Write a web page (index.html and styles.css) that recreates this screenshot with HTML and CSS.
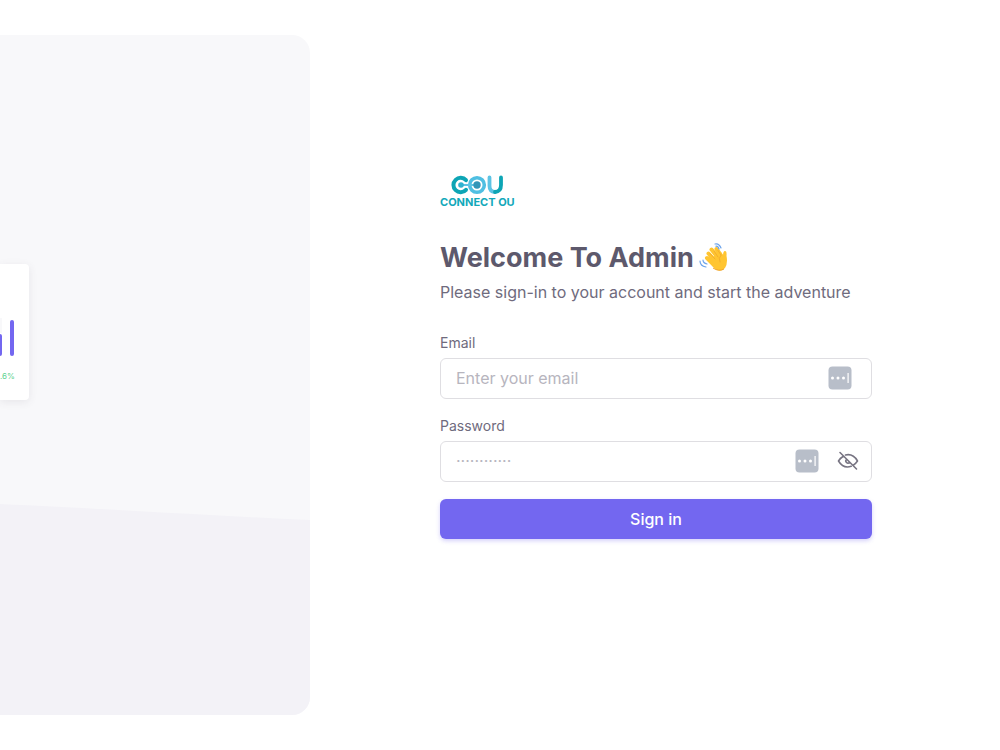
FILE: index.html
```html
<!DOCTYPE html>
<html lang="en">
<head>
<meta charset="utf-8">
<title>Admin sign in</title>
<link rel="stylesheet" href="styles.css">
</head>
<body>
<div class="page">
  <aside class="cover">
    <svg class="cover-wave" viewBox="0 0 310 680" preserveAspectRatio="none" aria-hidden="true"><path d="M0 469 C90 473 200 480 310 485 V680 H0Z" fill="#f3f2f7"/></svg>
    <div class="stat-card">
      <svg class="bars" width="15" height="40" viewBox="0 0 15 40" aria-hidden="true">
        <path d="M0 0h2v15H0z" fill="#f8f8fa"/>
        <path d="M0 16q2 0 2 2v18q0 2-2 2z" fill="#7367f0"/>
        <rect x="10" y="2" width="4" height="36" rx="2" fill="#7367f0"/>
      </svg>
      <span class="stat-change">.6%</span>
    </div>
  </aside>
  <main class="login">
    <div class="panel">
      <div class="logo">
        <svg width="54" height="20" viewBox="0 0 54 20" fill="none" aria-hidden="true">
          <path d="M16 5.200A7.200 7.200 0 1 0 16 14.800" stroke="#0da5b5" stroke-width="4" stroke-linecap="round"/>
          <circle cx="27" cy="10" r="7.300" stroke="#4fbfe2" stroke-width="3.600"/>
          <path d="M11 10H27" stroke="#5cc3e4" stroke-width="2"/>
          <circle cx="11" cy="10" r="2.800" fill="#2fb3cf"/>
          <circle cx="27" cy="10" r="3.700" fill="#3295b8"/>
          <path d="M39.500 2.500V11Q39.500 16.500 45 17" stroke="#5cc3e4" stroke-width="3.800" stroke-linecap="round"/>
          <path d="M51 2.500V10Q51 16.500 45 17" stroke="#0da5b5" stroke-width="3.800" stroke-linecap="round"/>
        </svg>
        <span class="logo-name">CONNECT OU</span>
      </div>
      <h1 class="title">Welcome To Admin
        <svg class="wave" width="30" height="30" viewBox="0 0 30 30" fill="none" aria-hidden="true">
          <g stroke="#ffc531" stroke-linecap="round">
            <path d="M9.500 10.500L17 19M12.500 6.500L20 16M17.500 6L23 14M8 15L15 22" stroke-width="4"/>
          </g>
          <path d="M9 17L22 9L24 13Q24 8 26 8Q28 8 27.500 13Q29 20 26 25Q21 30 15 25Z" fill="#ffc531"/>
          <path d="M11 10.500L16 16M15 8L19 14M19 7.500L22 12M22 12Q19 15 21 19" stroke="#f2ab2b" stroke-width="0.900" stroke-linecap="round"/>
          <path d="M14 25Q20 29 25 26" stroke="#f0a32a" stroke-width="1"/>
          <path d="M16 1Q20 0 22 5M17 3.200Q19 3 20 6M1 18Q1 23 7 24M4 17Q4 20 8 21" stroke="#6ca3ea" stroke-width="1.200" stroke-linecap="round"/>
        </svg>
      </h1>
      <p class="subtitle">Please sign-in to your account and start the adventure</p>
      <form class="form">
        <div class="group">
          <label for="email">Email</label>
          <div class="field field-email">
            <input id="email" type="email" placeholder="Enter your email">
            <svg class="autofill" width="24" height="24" viewBox="0 0 24 24" aria-hidden="true"><rect x="0.500" y="0.500" width="23" height="23" rx="4" fill="#b8bec9"/><g fill="#fff"><circle cx="4.500" cy="12" r="1.500"/><circle cx="10" cy="12" r="1.500"/><circle cx="15.500" cy="12" r="1.500"/><path d="M19.500 7h1.200v10h-1.200z"/></g></svg>
          </div>
        </div>
        <div class="group">
          <label for="password">Password</label>
          <div class="field">
            <input id="password" type="password" placeholder="············">
            <svg class="autofill" width="24" height="24" viewBox="0 0 24 24" aria-hidden="true"><rect x="0.500" y="0.500" width="23" height="23" rx="4" fill="#b8bec9"/><g fill="#fff"><circle cx="4.500" cy="12" r="1.500"/><circle cx="10" cy="12" r="1.500"/><circle cx="15.500" cy="12" r="1.500"/><path d="M19.500 7h1.200v10h-1.200z"/></g></svg>
            <button class="reveal" type="button" aria-label="Show password">
              <svg width="22" height="22" viewBox="0 0 22 22" fill="none" stroke="#777482" stroke-width="1.600" stroke-linecap="round" stroke-linejoin="round" aria-hidden="true"><path d="M3 2.500L19.500 19M9.500 9.500A2.100 2.100 0 0 0 12.500 12.500M8.500 5Q16 3.200 20.500 11Q18.800 13.500 16.500 15M14.200 16.300Q6.300 19 1.500 11Q3.200 8.200 5.700 6.800"/></svg>
            </button>
          </div>
        </div>
        <button class="submit" type="submit">Sign in</button>
      </form>
    </div>
  </main>
</div>
</body>
</html>
```
FILE: styles.css
```css
* { box-sizing: border-box; }
body {
  margin: 0;
  background: #fff;
  color: #5d596c;
  font-family: Inter, "Open Sans", sans-serif;
}
.page {
  display: grid;
  grid-template-columns: 31% 1fr;
  min-height: 100vh;
}
.cover {
  position: relative;
  display: flex;
  flex-direction: column;
  justify-content: center;
  align-items: flex-start;
  margin: 35px 0;
  padding-bottom: 86px;
  border-radius: 0 18px 18px 0;
  background: #f8f8fa;
  overflow: hidden;
}
.cover-wave {
  position: absolute;
  inset: 0;
  width: 100%;
  height: 100%;
}
.stat-card {
  position: relative;
  display: flex;
  flex-direction: column;
  gap: 12px;
  padding: 54px 14px 18px 0;
  border-radius: 0 4px 4px 0;
  background: #fff;
  box-shadow: 0 2px 8px rgba(75, 70, 92, 0.1);
}
.bars { display: block; }
.stat-change {
  color: #5fd392;
  font-size: 8px;
  line-height: 12px;
}
.login {
  display: flex;
  align-items: center;
  justify-content: center;
  padding: 0 24px 36px 26px;
}
.panel {
  width: 100%;
  max-width: 432px;
}
.logo {
  display: inline-flex;
  flex-direction: column;
  align-items: center;
  margin-bottom: 31px;
}
.logo svg { display: block; }
.logo-name {
  color: #12a8ba;
  font-size: 11px;
  font-weight: 700;
  line-height: 14px;
}
.title {
  display: flex;
  align-items: center;
  gap: 5px;
  margin: 0 0 4px;
  font-size: 27px;
  font-weight: 700;
  line-height: 36px;
}
.subtitle {
  margin: 0 0 29px;
  color: #6f6b7d;
  font-size: 16px;
  line-height: 24px;
}
.form {
  display: flex;
  flex-direction: column;
  gap: 17px;
}
.group {
  display: flex;
  flex-direction: column;
  gap: 5px;
}
.group label {
  color: #6f6b7d;
  font-size: 14px;
  line-height: 20px;
}
.field {
  display: flex;
  align-items: center;
  gap: 18px;
  height: 41px;
  padding: 0 12px 2px 15px;
  border: 1px solid #dfdee2;
  border-radius: 6px;
}
.field-email { padding-right: 19px; }
.field input {
  flex: 1;
  min-width: 0;
  padding: 0;
  border: 0;
  outline: 0;
  background: none;
  color: #6f6b7d;
  font: inherit;
  font-size: 16px;
}
.field input::placeholder {
  color: #b7b5be;
  opacity: 1;
}
.reveal {
  display: flex;
  padding: 0;
  border: 0;
  background: none;
}
.submit {
  height: 40px;
  border: 0;
  border-radius: 6px;
  background: #7367f0;
  box-shadow: 0 2px 4px rgba(115, 103, 240, 0.3);
  color: #fff;
  font: inherit;
  font-size: 16px;
  font-weight: 500;
}
```
